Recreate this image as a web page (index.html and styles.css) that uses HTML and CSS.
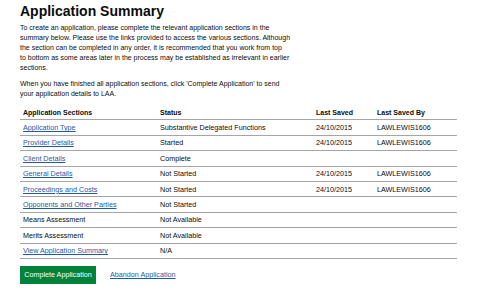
FILE: index.html
```html
<!DOCTYPE html>
<html>
<head>
<meta charset="utf-8">
<link rel="stylesheet" href="styles.css">
</head>
<body>
<main class="page">
  <h1 class="title">Application Summary</h1>
  <p class="intro">To create an application, please complete the relevant application sections in the<br>summary below. Please use the links provided to access the various sections. Although<br>the section can be completed in any order, it is recommended that you work from top<br>to bottom as some areas later in the process may be established as irrelevant in earlier<br>sections.</p>
  <p class="intro">When you have finished all application sections, click 'Complete Application' to send<br>your application details to LAA.</p>
  <table class="summary">
    <thead>
      <tr><th class="c1">Application Sections</th><th class="c2">Status</th><th class="c3">Last Saved</th><th class="c4">Last Saved By</th></tr>
    </thead>
    <tbody>
      <tr><td><a href="#">Application Type</a></td><td>Substantive Delegated Functions</td><td>24/10/2015</td><td>LAWLEWIS1606</td></tr>
      <tr><td><a href="#">Provider Details</a></td><td>Started</td><td>24/10/2015</td><td>LAWLEWIS1606</td></tr>
      <tr><td><a href="#">Client Details</a></td><td>Complete</td><td></td><td></td></tr>
      <tr><td><a href="#">General Details</a></td><td>Not Started</td><td>24/10/2015</td><td>LAWLEWIS1606</td></tr>
      <tr><td><a href="#">Proceedings and Costs</a></td><td>Not Started</td><td>24/10/2015</td><td>LAWLEWIS1606</td></tr>
      <tr><td><a href="#">Opponents and Other Parties</a></td><td>Not Started</td><td></td><td></td></tr>
      <tr><td>Means Assessment</td><td>Not Available</td><td></td><td></td></tr>
      <tr><td>Merits Assessment</td><td>Not Available</td><td></td><td></td></tr>
      <tr><td><a href="#">View Application Summary</a></td><td>N/A</td><td></td><td></td></tr>
    </tbody>
  </table>
  <div class="actions">
    <button class="btn">Complete Application</button>
    <a href="#" class="abandon">Abandon Application</a>
  </div>
</main>
</body>
</html>
```
FILE: styles.css
```css
html, body { margin: 0; padding: 0; background: #fff; }
body { font-family: "Liberation Sans", Arial, sans-serif; color: #0b0c0c; }
.page { padding: 3px 0 0 20px; width: 437px; }
.title { font-size: 14px; line-height: 16px; margin: 0 0 4px; font-weight: bold; }
.intro { font-size: 7px; line-height: 10px; margin: 0 0 6px; width: 300px; }
.summary { border-collapse: collapse; width: 437px; font-size: 7.2px; margin-top: 3px; }
.summary th, .summary td { text-align: left; padding: 0 3px; height: 14.4px; border-bottom: 1px solid #a5a5a5; white-space: nowrap; }
.summary th { font-weight: bold; font-size: 7px; }
.c1 { width: 131px; }
.c2 { width: 150px; }
.c3 { width: 55px; }
a { color: #1f5aa6; text-decoration: underline; }
.actions { display: flex; align-items: center; gap: 14px; margin-top: 7px; }
.btn { background: #00823b; color: #fff; border: 0; font-family: "Liberation Sans", Arial, sans-serif; font-size: 7.2px; height: 18px; width: 76px; padding: 0; border-radius: 0; box-shadow: 0 1px 0 #003618; }
.abandon { font-size: 7.2px; }
```
